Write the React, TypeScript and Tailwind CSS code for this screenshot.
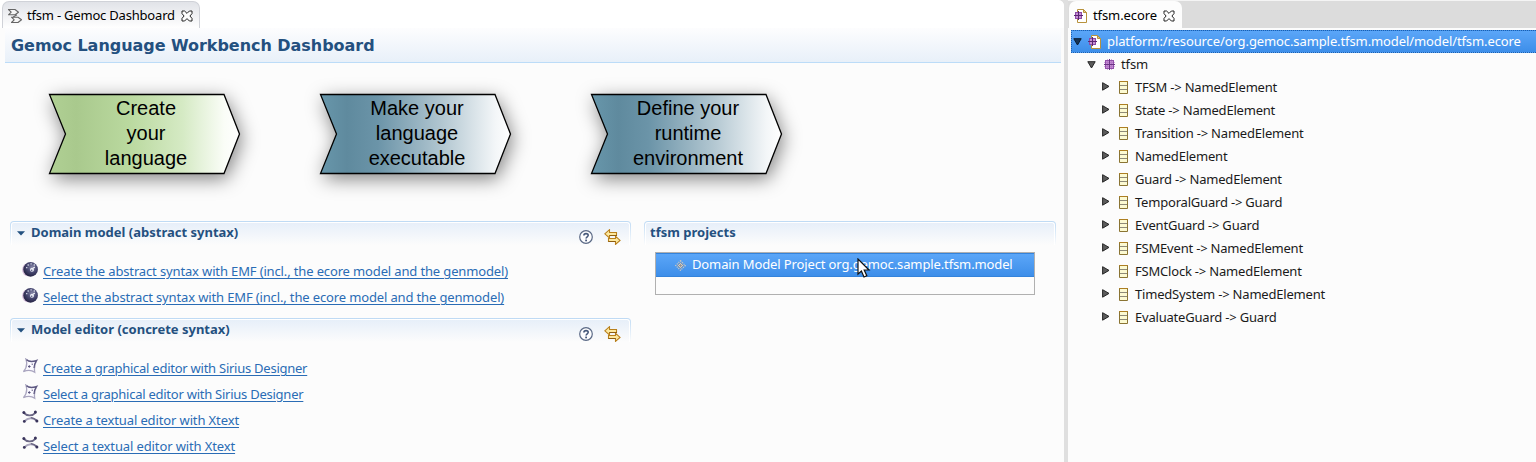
import React from 'react';

function CloseIcon() {
  return (
    <svg width="12" height="12" viewBox="0 0 12 12" className="shrink-0">
      <path
        d="M1 1H3.6L6 3.4L8.4 1H11V3.6L8.9 6L11 8.4V11H8.4L6 8.6L3.6 11H1V8.4L3.1 6L1 3.6Z"
        fill="#fdfdfd"
        stroke="#222"
      />
    </svg>
  );
}

function DashboardIcon() {
  return (
    <svg width="16" height="16" viewBox="0 0 16 16" className="shrink-0">
      <g fill="#f6f6f6" stroke="#666" strokeWidth="1.1" strokeLinejoin="round">
        <path d="M1.5 1.5H8L11.5 4.2L8 6.8H1.5L4.2 4.2Z" />
        <path d="M4.5 9.2H11L14.5 11.8L11 14.5H4.5L7.2 11.8Z" />
        <path d="M10 6.8L6.2 9" fill="none" />
      </g>
    </svg>
  );
}

function PackageIcon() {
  return (
    <svg width="11" height="11" viewBox="0 0 11 11" className="shrink-0">
      <path d="M3.5 0V11M7.5 0V11M0 3.5H11M0 7.5H11" stroke="#b678c8" strokeOpacity=".6" />
      <rect x="1.5" y="1.5" width="8" height="8" fill="#c58fd4" stroke="#9350ab" />
      <path d="M3.5 2V9M7.5 2V9M2 3.5H9M2 7.5H9" stroke="#b678c8" />
      <path d="M5.5 0V11M0 5.5H11" stroke="#6b3384" />
    </svg>
  );
}

function EcoreFileIcon() {
  return (
    <svg width="14" height="16" viewBox="0 0 14 16" className="shrink-0">
      <path d="M3.5 1.5H9.5L12.5 4.5V14.5H3.5Z" fill="#fff" stroke="#b8923c" />
      <path d="M9.5 1.5V4.5H12.5Z" fill="#e8cf8c" stroke="#b8923c" />
      <rect x="1.5" y="4.5" width="6" height="6" fill="#c58fd4" stroke="#8d4aa6" />
      <path d="M4.5 3V12M0 7.5H9" stroke="#5b2673" />
    </svg>
  );
}

function ClassIcon() {
  return (
    <svg width="9" height="13" viewBox="0 0 9 13" className="shrink-0">
      <path d="M.5 .5H8.5V12.5H.5Z" fill="#fcfad2" stroke="#8a7433" />
      <path d="M1 4.5H8M1 8.5H8" stroke="#8e8a78" />
      <path d="M0 .5H9" stroke="#ad7f22" />
    </svg>
  );
}

function Collapsed() {
  return (
    <svg width="8" height="9" viewBox="0 0 8 9" className="shrink-0">
      <path d="M.6 .7L7 4.4L.6 8.2Z" fill="#5c5c5c" stroke="#262626" />
    </svg>
  );
}

function Expanded({ dark }: { dark?: boolean }) {
  return (
    <svg width="9" height="8" viewBox="0 0 9 8" className="shrink-0">
      <path d="M.8 .7H8.2L4.5 7Z" fill={dark ? '#173556' : '#5c5c5c'} stroke={dark ? '#0b1d33' : '#262626'} />
    </svg>
  );
}

function EmfIcon() {
  return (
    <svg width="17" height="17" viewBox="0 0 17 17" className="shrink-0">
      <defs>
        <radialGradient id="emf" cx=".6" cy=".35" r=".7">
          <stop offset="0" stopColor="#8585a6" />
          <stop offset=".5" stopColor="#474770" />
          <stop offset="1" stopColor="#1f1d3c" />
        </radialGradient>
      </defs>
      <ellipse cx="6.4" cy="8.8" rx="6.4" ry="6.5" fill="#d7bfdc" />
      <circle cx="8.6" cy="8.4" r="7.3" fill="url(#emf)" />
      <path d="M5.5 4h1.4M8.4 2.8h1.4M11.6 4h1.4M4 6.6h1.4" stroke="#c9cddd" strokeWidth="1.3" fill="none" />
      <circle cx="10" cy="8.8" r="2" fill="#eef0f7" />
      <path d="M11 7.3l1.8-1.2" stroke="#eef0f7" strokeWidth="1.3" />
      <circle cx="9.7" cy="9.2" r=".8" fill="#5c5c84" />
    </svg>
  );
}

function SiriusIcon() {
  return (
    <svg width="17" height="16" viewBox="0 0 17 16" className="shrink-0">
      <path d="M4 1.2C6.5 3.6 10 3.7 14.8 2.3C12.6 5.6 12 9.5 12.7 14.2C9.5 12 5.5 12 1.4 13.6C4.5 10.3 5.3 5.5 4 1.2Z" fill="#fbfaff" stroke="#aaa6c0" strokeWidth="1.3" />
      <path d="M4.5 1.8C7 4 10.5 4 14.4 2.6C12.6 5.5 12 8 12 10" fill="none" stroke="#5d5880" strokeWidth="1.3" />
      <path d="M6 8.5H8.6M7.3 7.2V9.8M9.6 6.2H11" stroke="#5d5880" />
    </svg>
  );
}

function XtextIcon() {
  return (
    <svg width="17" height="16" viewBox="0 0 17 16" className="shrink-0">
      <g fill="none" strokeLinecap="round">
        <path d="M1.8 2.8C4.5 5.8 10 6.6 13.3 2.8" stroke="#6b6785" strokeWidth="1.9" />
        <path d="M2.4 11.2C6 7.4 11 7.4 14.8 10.6" stroke="#aaa6bd" strokeWidth="2" />
        <path d="M9.5 7.8C11.5 8 13 9 14.6 10.6" stroke="#6b6785" strokeWidth="1.5" />
      </g>
      <g fill="#39345b">
        <circle cx="1.9" cy="2.6" r="1.5" />
        <circle cx="13.4" cy="2.1" r="1.5" />
        <circle cx="2.3" cy="11.4" r="1.4" />
        <circle cx="14.9" cy="10.9" r="1.5" />
      </g>
    </svg>
  );
}

function HelpIcon() {
  return (
    <svg width="14" height="14" viewBox="0 0 14 14" className="shrink-0">
      <circle cx="7" cy="7" r="6.3" fill="#fdfdfe" stroke="#5b6a86" strokeWidth="1.2" />
      <path d="M4.9 5.4C4.9 3 9.2 3 9.2 5.3C9.2 6.8 7.1 6.8 7.1 8.5" fill="none" stroke="#46587a" strokeWidth="1.6" />
      <rect x="6.2" y="9.6" width="1.8" height="1.7" fill="#46587a" />
    </svg>
  );
}

function SwapIcon() {
  return (
    <svg width="17" height="16" viewBox="0 0 17 16" className="shrink-0">
      <g fill="#fde9a0" stroke="#b9801c" strokeWidth="1.1">
        <path d="M.8 4.8L5.5 .7V3.5H12.5V6.5H5.5V9Z" />
        <path d="M16 11.4L11.5 7.2V9.5H4.5V12.5H11.5V15.4Z" />
      </g>
      <path d="M5.5 6.5H13M4.5 12.5H11.5" stroke="#8f5f10" />
    </svg>
  );
}

function DiamondIcon() {
  return (
    <svg width="11" height="11" viewBox="0 0 11 11" className="shrink-0">
      <path d="M5.5 .7L10.3 5.5L5.5 10.3L.7 5.5Z" fill="none" stroke="#c9c7c2" strokeWidth="1.2" strokeDasharray="1.2 1" />
      <path d="M5.5 2.6L8.4 5.5L5.5 8.4L2.6 5.5Z" fill="#d8d5cc" stroke="#7e8797" strokeWidth=".8" />
      <path d="M5.5 4V7M4 5.5H7" stroke="#8d8d90" strokeWidth=".8" />
    </svg>
  );
}

function Pointer() {
  return (
    <svg width="14" height="21" viewBox="0 0 14 21" className="absolute left-[201px] top-[5px]">
      <path d="M1 1V16.2L4.4 13L7 19L9.8 17.8L7.2 12H12Z" fill="#fff" stroke="#111" strokeWidth="1.2" />
    </svg>
  );
}

type Tone = 'green' | 'blue';

function Step({ tone, lines }: { tone: Tone; lines: string[] }) {
  const id = 'step-' + tone;
  return (
    <svg width="271" height="148" viewBox="0 0 271 148" className="shrink-0 overflow-visible">
      <defs>
        <linearGradient id="step-green">
          <stop offset="0" stopColor="#b0d094" />
          <stop offset=".14" stopColor="#a9c98d" />
          <stop offset=".42" stopColor="#bad99f" />
          <stop offset=".7" stopColor="#d5eac4" />
          <stop offset=".92" stopColor="#fafdf7" />
          <stop offset="1" stopColor="#ffffff" />
        </linearGradient>
        <linearGradient id="step-blue">
          <stop offset="0" stopColor="#6897ab" />
          <stop offset=".14" stopColor="#5f8a9e" />
          <stop offset=".3" stopColor="#6b94a8" />
          <stop offset=".65" stopColor="#b4c8d2" />
          <stop offset=".92" stopColor="#f3f6f8" />
          <stop offset="1" stopColor="#ffffff" />
        </linearGradient>
        <filter id="step-shadow" x="-25%" y="-60%" width="150%" height="220%" colorInterpolationFilters="sRGB">
          <feGaussianBlur stdDeviation="9.5" />
        </filter>
      </defs>
      <path d="M49.5 30.5H224L239.5 70L224 109.5H49.5L65.5 70Z" transform="translate(2 5)" fill="#000" fillOpacity=".5" filter="url(#step-shadow)" />
      <path d="M49.5 30.5H224L239.5 70L224 109.5H49.5L65.5 70Z" fill={`url(#${id})`} stroke="#000" strokeWidth="1.3" />
      <g className="font-['Liberation_Sans',sans-serif] text-[20px]" fill="#000" textAnchor="middle">
        {lines.map((line, i) => (
          <text key={line} x="146" y={51.3 + i * 25}>{line}</text>
        ))}
      </g>
    </svg>
  );
}

function SectionHeader({ title, tools }: { title: string; tools?: boolean }) {
  return (
    <div className="h-6 shrink-0 rounded-t-[4px] bg-linear-to-b from-[#bedaf4] to-[#fcfcfc] px-px pt-px">
      <div className="flex h-full items-start rounded-t-[3px] border-x border-t border-white bg-linear-to-b from-[#e7eff9] to-[#fcfcfc]">
        {tools && (
          <svg width="9" height="5" viewBox="0 0 9 5" className="mt-2 ml-[5px] mr-[5px] shrink-0">
            <path d="M0 .3H8L4 4.4Z" fill="#22507f" />
          </svg>
        )}
        <h2 className={(tools ? '' : 'ml-1 ') + 'whitespace-nowrap text-[13px] leading-[18px] font-bold text-[#24507f]'}>{title}</h2>
        {tools && (
          <div className="ml-auto mr-2 mt-[6px] flex items-center gap-[11px]">
            <HelpIcon />
            <SwapIcon />
          </div>
        )}
      </div>
    </div>
  );
}

function Link({ icon, text, tracking }: { icon: React.ReactNode; text: string; tracking: string }) {
  return (
    <div className="flex h-[26px] items-start pl-3">
      <span className="mt-[3px]">{icon}</span>
      <a className={'ml-1 mt-1 whitespace-nowrap leading-[18px] text-[#2a6cb5] underline decoration-1 underline-offset-2 ' + tracking}>{text}</a>
    </div>
  );
}

const classes = [
  'TFSM -> NamedElement',
  'State -> NamedElement',
  'Transition -> NamedElement',
  'NamedElement',
  'Guard -> NamedElement',
  'TemporalGuard -> Guard',
  'EventGuard -> Guard',
  'FSMEvent -> NamedElement',
  'FSMClock -> NamedElement',
  'TimedSystem -> NamedElement',
  'EvaluateGuard -> Guard',
];

export default function App() {
  return (
    <div className="flex h-[462px] w-[1536px] overflow-hidden bg-[#dfdfdf] font-['Noto_Sans',sans-serif] text-[13px] text-[#1a1a1a]">
      <main className="flex w-[1064px] shrink-0 flex-col rounded-tr-[6px] bg-[#fcfcfc]">
        <div className="flex h-7 shrink-0 rounded-tr-[6px] bg-white pt-px pl-[2px]">
          <div className="flex w-[198px] items-center rounded-t-[7px] border-x border-t border-[#d0d2d8] bg-linear-to-b from-[#e1e3e8] to-white pt-px pl-1 text-black">
            <DashboardIcon />
            <span className="ml-1 mr-auto whitespace-nowrap tracking-[-0.2px]">tfsm - Gemoc Dashboard</span>
            <span className="mr-[6px]"><CloseIcon /></span>
          </div>
        </div>
        <header className="ml-[5px] mr-[3px] flex h-[35px] shrink-0 items-center border-b border-[#bcdcf8] bg-linear-to-b from-[#fdfdfe] to-[#e8f0f9] pt-px pl-[6px]">
          <h1 className="whitespace-nowrap font-['DejaVu_Sans',sans-serif] text-[16px] leading-[22px] font-bold tracking-[-0.04px] text-[#24507f]">
            Gemoc Language Workbench Dashboard
          </h1>
        </header>
        <div className="mt-px flex h-[148px] shrink-0">
          <Step tone="green" lines={['Create', 'your', 'language']} />
          <Step tone="blue" lines={['Make your', 'language', 'executable']} />
          <Step tone="blue" lines={['Define your', 'runtime', 'environment']} />
        </div>
        <div className="mt-[9px] flex gap-[13px] pl-[10px]">
          <div className="flex w-[621px] flex-col">
            <SectionHeader title="Domain model (abstract syntax)" tools />
            <div className="mt-[13px] h-[60px]">
              <Link icon={<EmfIcon />} text="Create the abstract syntax with EMF (incl., the ecore model and the genmodel)" tracking="tracking-[-0.14px]" />
              <Link icon={<EmfIcon />} text="Select the abstract syntax with EMF (incl., the ecore model and the genmodel)" tracking="tracking-[-0.14px]" />
            </div>
            <SectionHeader title="Model editor (concrete syntax)" tools />
            <div className="mt-[13px]">
              <Link icon={<SiriusIcon />} text="Create a graphical editor with Sirius Designer" tracking="tracking-[-0.25px]" />
              <Link icon={<SiriusIcon />} text="Select a graphical editor with Sirius Designer" tracking="tracking-[-0.25px]" />
              <Link icon={<XtextIcon />} text="Create a textual editor with Xtext" tracking="tracking-[-0.12px]" />
              <Link icon={<XtextIcon />} text="Select a textual editor with Xtext" tracking="tracking-[-0.12px]" />
            </div>
          </div>
          <div className="flex w-[412px] flex-col">
            <SectionHeader title="tfsm projects" />
            <div className="relative ml-[11px] mt-[7px] h-[43px] w-[380px] border border-[#b0b0b0]">
              <div className="flex h-6 items-center border-y border-[#3483db] bg-linear-to-b from-[#5ba6f8] to-[#3d8ee9] pl-[19px] text-white">
                <DiamondIcon />
                <span className="ml-[6px] whitespace-nowrap tracking-[-0.12px]">Domain Model Project org.gemoc.sample.tfsm.model</span>
              </div>
              <Pointer />
            </div>
          </div>
        </div>
      </main>

      <aside className="ml-1 flex w-[468px] flex-col bg-[#fcfcfc]">
        <div className="flex h-7 shrink-0 border-t border-[#f4f4f4] bg-[#dcdcdc] pl-px">
          <div className="flex w-[113px] items-center rounded-t-[7px] bg-[#fdfdfd] pt-[2px] pl-[5px] text-black">
            <EcoreFileIcon />
            <span className="ml-[5px] mr-auto whitespace-nowrap tracking-[-0.1px]">tfsm.ecore</span>
            <span className="mr-[7px]"><CloseIcon /></span>
          </div>
        </div>
        <div className="ml-[3px] mt-[2px] flex h-[23px] shrink-0 items-center border border-r-0 border-dotted border-[#1c5fae] bg-linear-to-b from-[#5ba6f8] to-[#3d8ee9] pl-px text-white">
          <Expanded dark />
          <span className="ml-[6px]"><EcoreFileIcon /></span>
          <span className="ml-[5px] whitespace-nowrap tracking-[-0.1px]">platform:/resource/org.gemoc.sample.tfsm.model/model/tfsm.ecore</span>
        </div>
        <div className="flex h-[23px] shrink-0 items-center pl-[19px]">
          <Expanded />
          <span className="ml-2"><PackageIcon /></span>
          <span className="ml-[6px] tracking-[-0.1px]">tfsm</span>
        </div>
        {classes.map((name) => (
          <div key={name} className="flex h-[23px] shrink-0 items-center pl-[34px]">
            <span className="mb-[2px]"><Collapsed /></span>
            <span className="ml-[9px]"><ClassIcon /></span>
            <span className="ml-[7px] whitespace-nowrap tracking-[-0.2px]">{name}</span>
          </div>
        ))}
      </aside>
    </div>
  );
}
